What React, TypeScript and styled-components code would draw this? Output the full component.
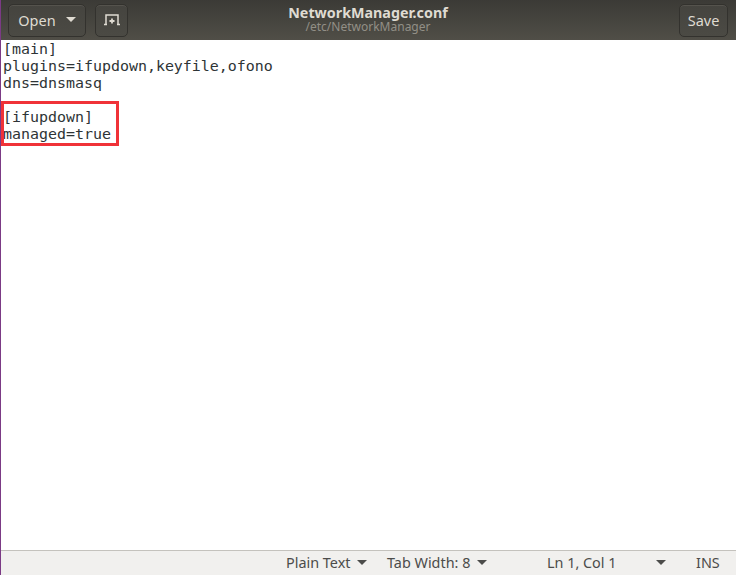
import { createGlobalStyle, styled } from 'styled-components';

const GlobalStyle = createGlobalStyle`
  html, body {
    margin: 0;
    padding: 0;
    background: #fff;
  }
`;

const Window = styled.div`
  display: flex;
  flex-direction: column;
  width: 736px;
  height: 575px;
  box-sizing: border-box;
  border-left: 1px solid #7b3a85;
  overflow: hidden;
  font-family: 'Noto Sans', 'Open Sans', sans-serif;
`;

const HeaderBar = styled.header`
  display: grid;
  grid-template-columns: 1fr auto 1fr;
  align-items: center;
  height: 40px;
  padding: 3px 8px 3px 7px;
  box-sizing: border-box;
  background: linear-gradient(#3b3a36, #504e47);
`;

const ButtonGroup = styled.div`
  display: flex;
  gap: 9px;
`;

const RightGroup = styled(ButtonGroup)`
  justify-content: flex-end;
`;

const HeaderButton = styled.button`
  display: flex;
  align-items: center;
  justify-content: center;
  gap: 9px;
  height: 33px;
  width: ${(p: { $w: number }) => p.$w}px;
  padding: 0 0 1px;
  border: 1px solid #33322e;
  border-radius: 5px;
  background: linear-gradient(#45443f, #4b4a44);
  box-shadow: inset 0 1px 0 #55534d;
  color: #dfdbd2;
  font: 14.5px 'Noto Sans', 'Open Sans', sans-serif;
`;

const Caret = styled.span`
  width: 0;
  height: 0;
  border-left: 5px solid transparent;
  border-right: 5px solid transparent;
  border-top: 5px solid ${(p: { $color: string }) => p.$color};
`;

const OpenCaret = styled(Caret)`
  margin-left: 1px;
`;

const TitleBox = styled.div`
  display: flex;
  flex-direction: column;
  align-items: center;
  margin-top: -1px;
`;

const Title = styled.div`
  height: 15px;
  color: #dfdbd2;
  font-size: 14.3px;
  line-height: 15px;
  font-weight: 700;
`;

const Subtitle = styled.div`
  height: 14px;
  color: #928f86;
  font-size: 12px;
  line-height: 14px;
`;

const Editor = styled.main`
  position: relative;
  flex: 1;
  padding: 1px 0 0 2px;
  background: #fff;
`;

const Code = styled.pre`
  margin: 0;
  color: #2e3436;
  font: 14.95px/17px 'DejaVu Sans Mono', monospace;
`;

const Highlight = styled.div`
  position: absolute;
  left: 0;
  top: 61px;
  width: 118px;
  height: 45px;
  box-sizing: border-box;
  border: 3px solid #f03238;
`;

const StatusBar = styled.footer`
  display: flex;
  align-items: center;
  height: 25px;
  padding-bottom: 2px;
  box-sizing: border-box;
  border-top: 1px solid #c4c2bd;
  background: #f1f0ee;
  color: #4c4c4a;
  font-size: 14.4px;
`;

const StatusItem = styled.div`
  display: flex;
  align-items: center;
  gap: 6.5px;
  width: ${(p: { $w: number }) => p.$w}px;
  white-space: nowrap;
`;

const newDocIcon = (
  <svg width="16" height="12" viewBox="0 0 16 12" fill="none" stroke="#dfdbd2" strokeWidth="1.5">
    <path d="M2 11V1h12v10" />
    <path d="M8 4.5v5M5.5 7h5" strokeWidth="1.8" />
    <path d="M0 10.5h3M13 10.5h3" />
  </svg>
);

export default function App() {
  return (
    <>
      <GlobalStyle />
      <Window>
        <HeaderBar>
          <ButtonGroup>
            <HeaderButton $w={78}>
              Open
              <OpenCaret $color="#dfdbd2" />
            </HeaderButton>
            <HeaderButton $w={33}>{newDocIcon}</HeaderButton>
          </ButtonGroup>
          <TitleBox>
            <Title>NetworkManager.conf</Title>
            <Subtitle>/etc/NetworkManager</Subtitle>
          </TitleBox>
          <RightGroup>
            <HeaderButton $w={49}>Save</HeaderButton>
          </RightGroup>
        </HeaderBar>
        <Editor>
          <Code>{`[main]
plugins=ifupdown,keyfile,ofono
dns=dnsmasq

[ifupdown]
managed=true`}</Code>
          <Highlight />
        </Editor>
        <StatusBar>
          <StatusItem $w={285} />
          <StatusItem $w={101}>
            Plain Text
            <Caret $color="#4c4c4a" />
          </StatusItem>
          <StatusItem $w={160}>
            Tab Width: 8
            <Caret $color="#4c4c4a" />
          </StatusItem>
          <StatusItem $w={109}>Ln 1, Col 1</StatusItem>
          <StatusItem $w={40}>
            <Caret $color="#4c4c4a" />
          </StatusItem>
          <StatusItem $w={30}>INS</StatusItem>
        </StatusBar>
      </Window>
    </>
  );
}
